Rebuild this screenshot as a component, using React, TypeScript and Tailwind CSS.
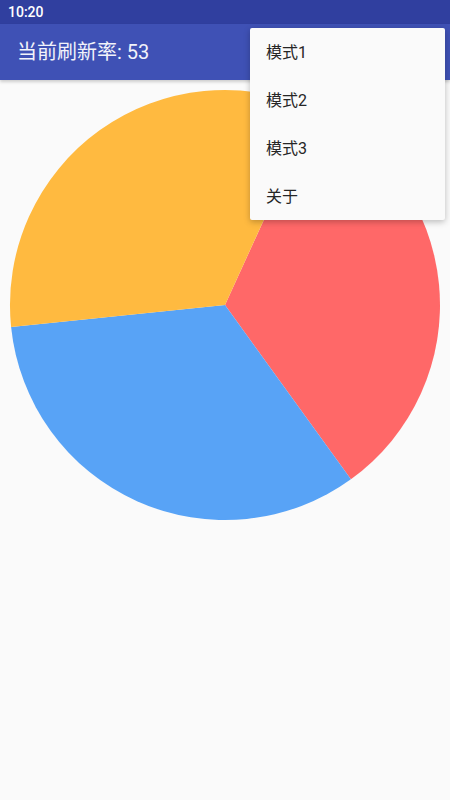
import React from "react";

const FONT = { fontFamily: 'Roboto, "Noto Sans CJK SC", sans-serif' };

const menuItems = ["模式1", "模式2", "模式3", "关于"];

function PieChart() {
  // center (225,225), r = 215, three slices of ~120deg
  return (
    <svg width="450" height="450" viewBox="0 0 450 450" className="block">
      <path d="M225 225 L314.2 29.4 A215 215 0 0 1 350.9 399.3 Z" fill="#FF6868" />
      <path d="M225 225 L350.9 399.3 A215 215 0 0 1 11.1 247 Z" fill="#58A3F6" />
      <path d="M225 225 L11.1 247 A215 215 0 0 1 314.2 29.4 Z" fill="#FFBA40" />
    </svg>
  );
}

export default function App() {
  return (
    <div className="relative w-[450px] h-[800px] bg-[#FAFAFA] overflow-hidden" style={FONT}>
      {/* status bar */}
      <div className="h-6 bg-[#303F9F] flex items-center px-2">
        <span className="text-white text-[14px] font-medium">10:20</span>
      </div>

      {/* toolbar */}
      <div className="relative z-10 h-14 bg-[#3F51B5] flex items-center pl-[17px] shadow-[0_2px_3px_rgba(0,0,0,0.18)]">
        <span className="text-[20px] text-[#F2F3FA] leading-none">当前刷新率: 53</span>
      </div>

      <PieChart />

      {/* overflow menu */}
      <div className="absolute z-20 left-[250px] top-[28px] w-[195px] bg-[#FAFAFA] rounded-[2px] shadow-[0_2px_6px_rgba(0,0,0,0.25)]">
        {menuItems.map((item) => (
          <div key={item} className="h-12 flex items-center pl-4 pt-[2px] text-[16px] text-[#262626]">
            {item}
          </div>
        ))}
      </div>
    </div>
  );
}
